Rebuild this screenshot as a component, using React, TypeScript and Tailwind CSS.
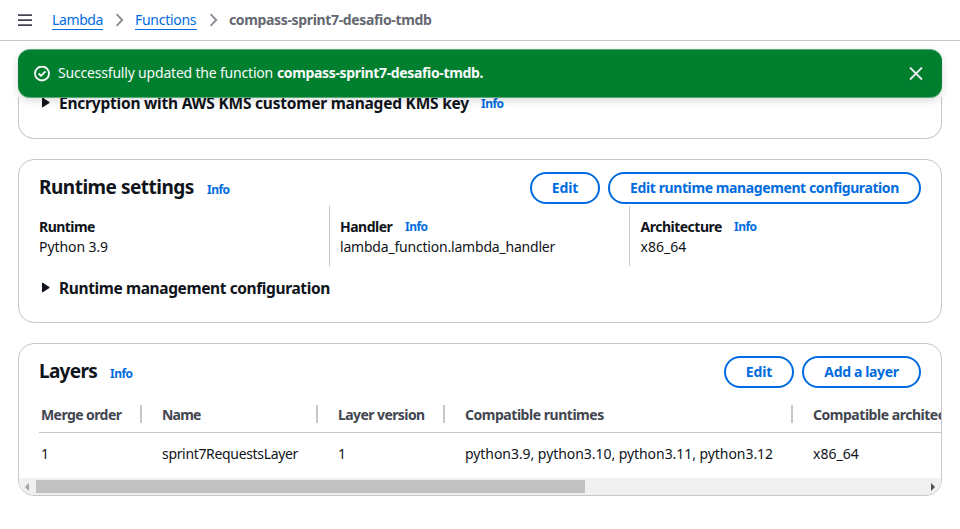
import type { ReactNode } from "react";

function Info() {
  return <a className="text-[12px] font-bold leading-[20px] tracking-[-0.5px] text-[#006ce0]">Info</a>;
}

function PillButton({ className, children }: { className: string; children: ReactNode }) {
  return (
    <button className={`flex h-[32px] items-center justify-center rounded-full border-2 border-[#006ce0] text-[14px] font-bold leading-[20px] text-[#006ce0] ${className}`}>
      {children}
    </button>
  );
}

function Caret() {
  return (
    <svg className="h-[11px] w-[9px] shrink-0" viewBox="0 0 9 11" aria-hidden="true">
      <path d="M1.5 1 L8.3 5.5 L1.5 10 Z" fill="#0f141a" stroke="#0f141a" strokeWidth="1" strokeLinejoin="round" />
    </svg>
  );
}

function Chevron() {
  return (
    <svg className="h-[14px] w-[10px] shrink-0" viewBox="0 0 10 14" fill="none" aria-hidden="true">
      <path d="M1.6 1.2 L7.2 7 L1.6 12.8" stroke="#8c8c94" strokeWidth="1.9" />
    </svg>
  );
}

function TopBar() {
  return (
    <header className="flex h-[41px] shrink-0 items-center border-b border-[#c6c6cd] pl-[18px] text-[14px] leading-[20px]">
      <svg className="h-[14px] w-[14px] shrink-0" viewBox="0 0 14 14" aria-hidden="true">
        <path d="M0 2.1h14M0 7.1h14M0 12.1h14" stroke="#424650" strokeWidth="1.7" />
      </svg>
      <a className="ml-[20px] w-[51px] border-b border-[#006ce0] leading-[19px] tracking-[-0.38px] text-[#006ce0]">Lambda</a>
      <span className="ml-[12px] flex">
        <Chevron />
      </span>
      <a className="ml-[10px] w-[62px] border-b border-[#006ce0] leading-[19px] tracking-[-0.28px] text-[#006ce0]">Functions</a>
      <span className="ml-[12px] flex">
        <Chevron />
      </span>
      <span className="ml-[10px] font-bold tracking-[-0.35px] text-[#656871]">compass-sprint7-desafio-tmdb</span>
    </header>
  );
}

function SuccessAlert() {
  return (
    <div className="relative z-10 flex h-[49px] shrink-0 items-center rounded-[12px] border-y border-[#5aa878] bg-[#00802f] pl-[16px] pr-[19px] text-[14px] leading-[20px] text-[#f9f9fa] shadow-[0_3px_8px_rgba(0,7,22,0.14)]">
      <svg className="h-[16px] w-[16px] shrink-0" viewBox="0 0 16 16" fill="none" stroke="#f9f9fa" strokeWidth="1.8" aria-hidden="true">
        <circle cx="8" cy="7.5" r="7" />
        <path d="M4.6 7.5 L7 9.9 L11.4 5.3" strokeLinejoin="round" />
      </svg>
      <span className="ml-[8px] w-[219px] pb-[2px] tracking-[-0.19px]">Successfully updated the function</span>
      <span className="pb-[2px] font-bold tracking-[-0.35px]">compass-sprint7-desafio-tmdb.</span>
      <svg className="ml-auto h-[14px] w-[14px] shrink-0" viewBox="0 0 14 14" fill="none" aria-hidden="true">
        <path d="M1 0.5 L13 12.5 M13 0.5 L1 12.5" stroke="#ebebf0" strokeWidth="1.8" />
      </svg>
    </div>
  );
}

function EncryptionPanel() {
  return (
    <section className="-mt-px h-[42px] shrink-0 rounded-b-[16px] border border-t-0 border-[#c6c6cd] pl-[22px]">
      <div className="-mt-[5px] flex h-[20px] items-center">
        <Caret />
        <h3 className="ml-[9px] w-[422px] whitespace-nowrap pt-px text-[15.5px] font-bold leading-[20px] tracking-[-0.22px]">
          Encryption with AWS KMS customer managed KMS key
        </h3>
        <span className="flex pt-[3px]">
          <Info />
        </span>
      </div>
    </section>
  );
}

function RuntimePanel() {
  return (
    <section className="mt-[20px] h-[164px] shrink-0 rounded-[16px] border border-[#c6c6cd] px-[20px] pt-[12px]">
      <div className="flex h-[32px] items-center">
        <h2 className="w-[168px] pb-[2px] text-[19px] font-bold leading-[24px] tracking-[-0.5px]">Runtime settings</h2>
        <span className="flex pt-[4px]">
          <Info />
        </span>
        <div className="ml-auto flex gap-[8px]">
          <PillButton className="w-[70px] tracking-[-0.15px]">Edit</PillButton>
          <PillButton className="w-[313px] tracking-[-0.4px]">Edit runtime management configuration</PillButton>
        </div>
      </div>
      <div className="mt-[2px] flex h-[60px] text-[14px] leading-[20px]">
        <div className="w-[290px] pt-[11px]">
          <div className="font-bold tracking-[-0.55px]">Runtime</div>
          <div className="tracking-[-0.08px]">Python 3.9</div>
        </div>
        <div className="w-[300px] border-l border-[#c6c6cd] pl-[10px] pt-[11px]">
          <div className="flex">
            <span className="w-[65px] font-bold tracking-[-0.5px]">Handler</span>
            <Info />
          </div>
          <div className="tracking-[-0.2px]">lambda_function.lambda_handler</div>
        </div>
        <div className="border-l border-[#c6c6cd] pl-[10.5px] pt-[11px]">
          <div className="flex">
            <span className="w-[93.5px] font-bold tracking-[-0.5px]">Architecture</span>
            <Info />
          </div>
          <div>x86_64</div>
        </div>
      </div>
      <div className="ml-[2px] mt-[11px] flex h-[20px] items-center">
        <Caret />
        <h3 className="ml-[9px] pt-px text-[15.5px] font-bold leading-[20px] tracking-[-0.39px]">Runtime management configuration</h3>
      </div>
    </section>
  );
}

function LayersPanel() {
  return (
    <section className="mt-[20px] flex h-[153px] shrink-0 flex-col overflow-hidden rounded-[16px] border border-[#c6c6cd]">
      <div className="mt-[12px] flex h-[32px] shrink-0 items-center px-[20px]">
        <h2 className="w-[71px] pb-[2px] text-[19px] font-bold leading-[24px] tracking-[-0.7px]">Layers</h2>
        <span className="flex pt-[4px]">
          <Info />
        </span>
        <div className="ml-auto flex gap-[8px]">
          <PillButton className="w-[70px] tracking-[-0.15px]">Edit</PillButton>
          <PillButton className="w-[119px] tracking-[-0.35px]">Add a layer</PillButton>
        </div>
      </div>
      <div className="ml-[20px] flex h-[45px] shrink-0 items-center overflow-hidden whitespace-nowrap border-b border-[#c6c6cd] pt-[8px] text-[14px] font-bold leading-[20px] text-[#424650]">
        <div className="flex h-[18px] w-[103px] shrink-0 items-center border-r-2 border-[#c6c6cd] pl-[2px] pt-px tracking-[-0.58px]">Merge order</div>
        <div className="flex h-[18px] w-[176px] shrink-0 items-center border-r-2 border-[#c6c6cd] pl-[20px] pt-px tracking-[-0.8px]">Name</div>
        <div className="flex h-[18px] w-[127px] shrink-0 items-center border-r-2 border-[#c6c6cd] pl-[20px] pt-px tracking-[-0.58px]">Layer version</div>
        <div className="flex h-[18px] w-[348px] shrink-0 items-center border-r-2 border-[#c6c6cd] pl-[20px] pt-px tracking-[-0.47px]">Compatible runtimes</div>
        <div className="flex h-[18px] shrink-0 items-center pl-[20px] pt-px tracking-[-0.47px]">Compatible architectures</div>
      </div>
      <div className="flex h-[45px] shrink-0 items-center whitespace-nowrap pb-[4px] pl-[22px] text-[14px] leading-[20px]">
        <div className="w-[121px]">1</div>
        <div className="w-[176px] tracking-[-0.33px]">sprint7RequestsLayer</div>
        <div className="w-[127px]">1</div>
        <div className="w-[348px] tracking-[-0.055px]">python3.9, python3.10, python3.11, python3.12</div>
        <div>x86_64</div>
      </div>
      <div className="flex h-[17px] shrink-0 items-center bg-[#f0f0f0] pl-[6px] pr-[6px]">
        <svg className="h-[8px] w-[4px] shrink-0" viewBox="0 0 4 8" aria-hidden="true">
          <path d="M4 0 L0 4 L4 8 Z" fill="#a3a3a3" />
        </svg>
        <div className="ml-[7px] h-[13px] w-[549px] bg-[#c1c1c1]" />
        <svg className="ml-auto h-[8px] w-[4px] shrink-0" viewBox="0 0 4 8" aria-hidden="true">
          <path d="M0 0 L4 4 L0 8 Z" fill="#505050" />
        </svg>
      </div>
    </section>
  );
}

export default function App() {
  return (
    <div className="flex h-[529px] w-[960px] flex-col overflow-hidden bg-white font-['Noto_Sans','Open_Sans',sans-serif] text-[#0f141a]">
      <TopBar />
      <main className="flex flex-col px-[18px] pt-[8px]">
        <SuccessAlert />
        <EncryptionPanel />
        <RuntimePanel />
        <LayersPanel />
      </main>
    </div>
  );
}
